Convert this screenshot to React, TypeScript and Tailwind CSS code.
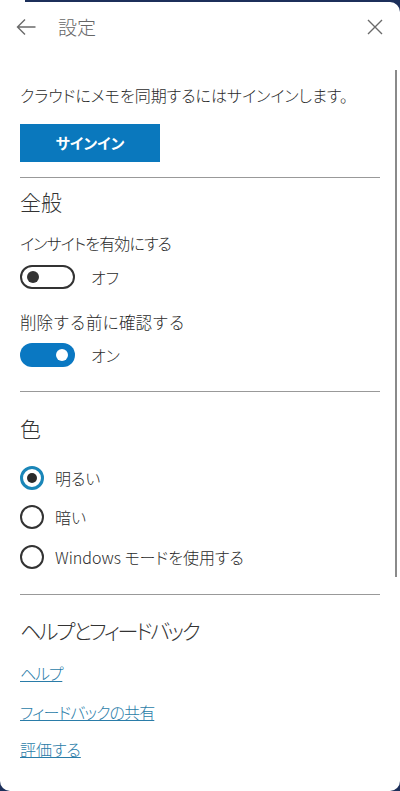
import React from "react";

const font = { fontFamily: '"Noto Sans CJK JP", "Noto Sans", sans-serif', fontFeatureSettings: '"palt"' };

function Toggle({ on }: { on: boolean }) {
  return on ? (
    <div className="w-[55px] h-[24px] rounded-full bg-[#0a78c2] flex items-center justify-end pr-[7px]">
      <div className="w-[12px] h-[12px] rounded-full bg-white" />
    </div>
  ) : (
    <div className="w-[55px] h-[24px] rounded-full border-2 border-[#333] flex items-center pl-[5px]">
      <div className="w-[12px] h-[12px] rounded-full bg-[#333]" />
    </div>
  );
}

function Radio({ on, label }: { on: boolean; label: string }) {
  return (
    <div className="flex items-center h-[24px]">
      {on ? (
        <div className="w-[24px] h-[24px] rounded-full border-[3px] border-[#1a86b8] flex items-center justify-center">
          <div className="w-[10px] h-[10px] rounded-full bg-[#2b2b2b]" />
        </div>
      ) : (
        <div className="w-[24px] h-[24px] rounded-full border-2 border-[#333]" />
      )}
      <span className="ml-[11px] text-[16px] leading-[20px] text-[#2b2b2b]">{label}</span>
    </div>
  );
}

export default function App() {
  return (
    <div className="w-[400px] h-[791px] bg-[#1c2f5a] flex flex-col overflow-hidden font-light" style={font}>
      <div className="h-[2px] flex">
        <div className="w-[25px] bg-white" />
      </div>
      <div className="relative flex-1 bg-white rounded-tr-[10px] rounded-b-[10px] flex flex-col">
        <div className="absolute right-[3px] top-[68px] w-[2px] h-[507px] bg-[#8a8a8a]" />
        <div className="h-[50px] flex items-center pl-[16px] pr-[17px]">
          <svg width="20" height="20" viewBox="0 0 20 20" fill="none" stroke="#6a6a6a" strokeWidth="1.4">
            <path d="M19.5 10H1.5M9 2.5L1.5 10l7.5 7.5" />
          </svg>
          <span className="ml-[22px] text-[19px] leading-[24px] text-[#666]">設定</span>
          <div className="flex-1" />
          <svg width="16" height="16" viewBox="0 0 16 16" fill="none" stroke="#6a6a6a" strokeWidth="1.4">
            <path d="M1 1l14 14M15 1L1 15" />
          </svg>
        </div>
        <div className="px-5 flex flex-col text-[#2b2b2b]">
          <p className="mt-[33px] text-[16px] leading-[20px]">クラウドにメモを同期するにはサインインします。</p>
          <div className="mt-[19px] w-[140px] h-[38px] bg-[#0a78bd] flex items-center justify-center text-white text-[15px] font-bold">
            サインイン
          </div>
          <div className="mt-[15px] h-px bg-[#999]" />
          <h2 className="mt-[9px] text-[21px] leading-[28px] text-[#333]">全般</h2>
          <p className="mt-[18px] text-[16px] leading-[20px] tracking-[-0.9px]">インサイトを有効にする</p>
          <div className="mt-[12px] flex items-center">
            <Toggle on={false} />
            <span className="ml-[16px] text-[16px] leading-[20px]">オフ</span>
          </div>
          <p className="mt-[23px] text-[16.5px] leading-[20px] [font-feature-settings:normal]">削除する前に確認する</p>
          <div className="mt-[11px] flex items-center">
            <Toggle on={true} />
            <span className="ml-[16px] text-[16px] leading-[20px]">オン</span>
          </div>
          <div className="mt-[24px] h-px bg-[#999]" />
          <h2 className="mt-[22px] text-[21px] leading-[28px] text-[#333]">色</h2>
          <div className="mt-[24px]">
            <Radio on={true} label="明るい" />
          </div>
          <div className="mt-[15px]">
            <Radio on={false} label="暗い" />
          </div>
          <div className="mt-[16px]">
            <Radio on={false} label="Windows モードを使用する" />
          </div>
          <div className="mt-[25px] h-px bg-[#999]" />
          <h2 className="mt-[21px] text-[21px] leading-[28px] text-[#333] tracking-[-2.4px]">ヘルプとフィードバック</h2>
          <a className="mt-[19px] text-[16px] leading-[20px] text-[#2a7ca8] underline self-start tracking-[-1.2px]">ヘルプ</a>
          <a className="mt-[19px] text-[16px] leading-[20px] text-[#2a7ca8] underline self-start tracking-[-0.9px]">フィードバックの共有</a>
          <a className="mt-[17px] text-[16px] leading-[20px] text-[#2a7ca8] underline self-start">評価する</a>
        </div>
      </div>
    </div>
  );
}
